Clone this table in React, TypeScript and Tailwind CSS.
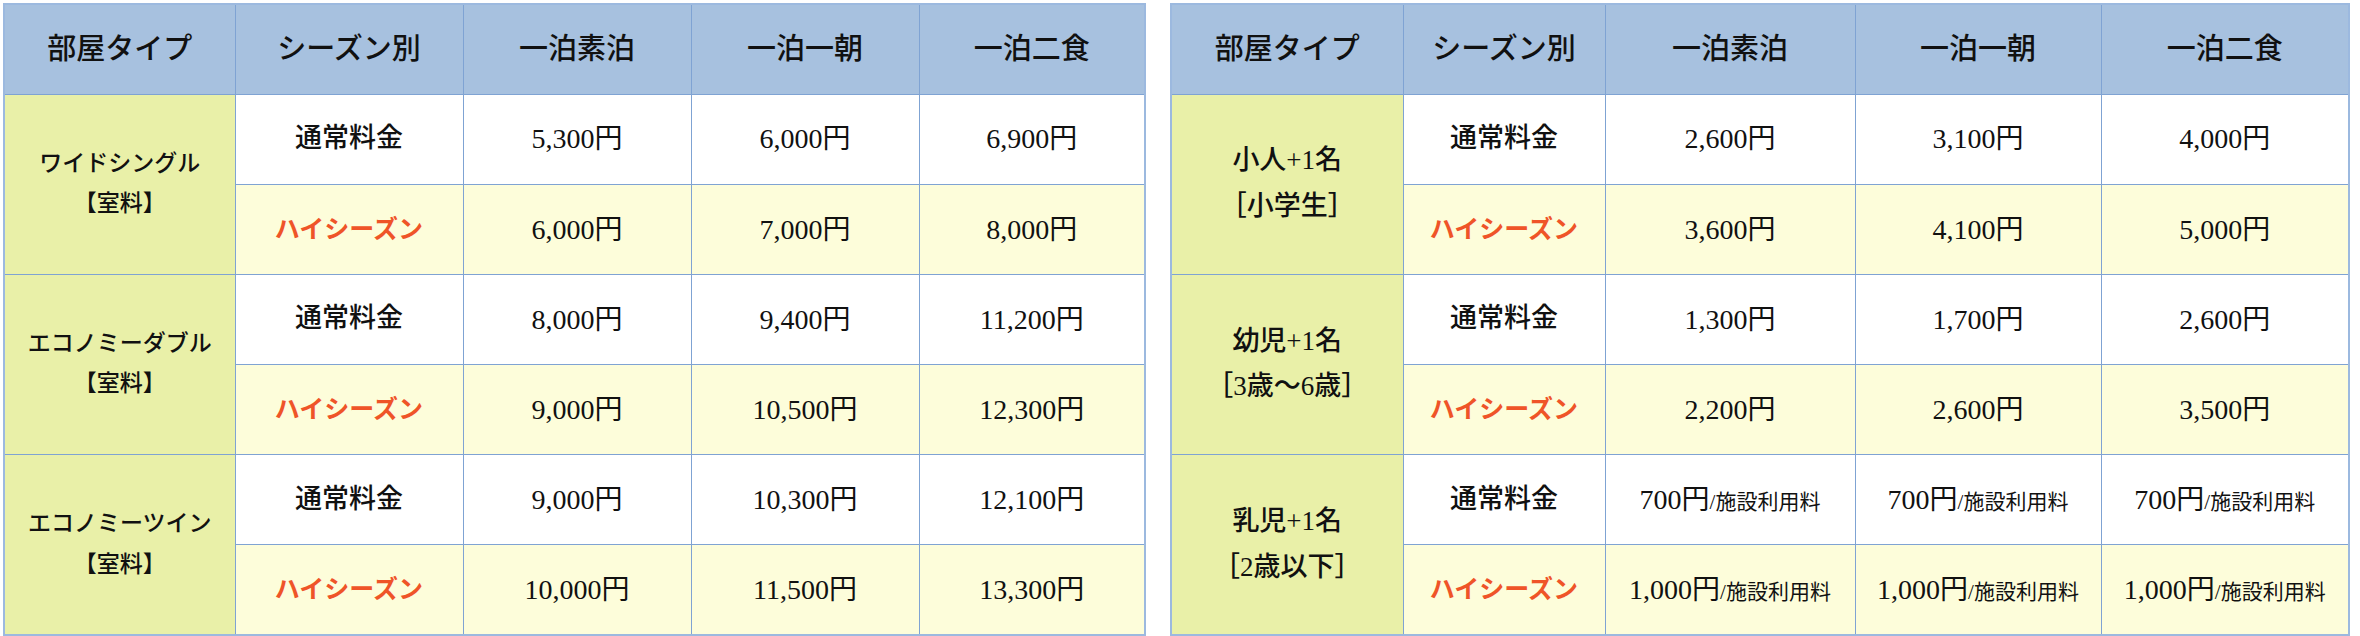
import React from "react";

interface Group {
  name: string;
  note: string;
  normal: string[];
  high: string[];
}

const headers = ["部屋タイプ", "シーズン別", "一泊素泊", "一泊一朝", "一泊二食"];

const rooms: Group[] = [
  {
    name: "ワイドシングル",
    note: "【室料】",
    normal: ["5,300円", "6,000円", "6,900円"],
    high: ["6,000円", "7,000円", "8,000円"],
  },
  {
    name: "エコノミーダブル",
    note: "【室料】",
    normal: ["8,000円", "9,400円", "11,200円"],
    high: ["9,000円", "10,500円", "12,300円"],
  },
  {
    name: "エコノミーツイン",
    note: "【室料】",
    normal: ["9,000円", "10,300円", "12,100円"],
    high: ["10,000円", "11,500円", "13,300円"],
  },
];

const kids: Group[] = [
  {
    name: "小人+1名",
    note: "［小学生］",
    normal: ["2,600円", "3,100円", "4,000円"],
    high: ["3,600円", "4,100円", "5,000円"],
  },
  {
    name: "幼児+1名",
    note: "［3歳～6歳］",
    normal: ["1,300円", "1,700円", "2,600円"],
    high: ["2,200円", "2,600円", "3,500円"],
  },
  {
    name: "乳児+1名",
    note: "［2歳以下］",
    normal: ["700円/施設利用料", "700円/施設利用料", "700円/施設利用料"],
    high: ["1,000円/施設利用料", "1,000円/施設利用料", "1,000円/施設利用料"],
  },
];

const td = "border border-[#7fa3d3] text-center align-middle p-0";

const Price = ({ value }: { value: string }) => {
  const [main, rest] = value.split("/");
  if (!rest) return <>{value}</>;
  return (
    <>
      {main}
      <span className="text-[21px]">/{rest}</span>
    </>
  );
};

const PriceTable = ({
  groups,
  widths,
  nameSize,
}: {
  groups: Group[];
  widths: string[];
  nameSize: string;
}) => (
  <table className="table-fixed border-collapse border-2 border-[#9cb9df]">
    <colgroup>
      {widths.map((w, i) => (
        <col key={i} className={w} />
      ))}
    </colgroup>
    <thead>
      <tr className="h-[90px] bg-[#a7c1df]">
        {headers.map((h) => (
          <th key={h} className={`${td} text-[29px] font-medium text-[#111]`}>
            {h}
          </th>
        ))}
      </tr>
    </thead>
    <tbody>
      {groups.map((g) => (
        <React.Fragment key={g.name}>
          <tr className="h-[90px] bg-white">
            <td rowSpan={2} className={`${td} bg-[#e9f0a8] font-medium ${nameSize}`}>
              <div>{g.name}</div>
              <div className="mt-2">{g.note}</div>
            </td>
            <td className={`${td} text-[27px] font-medium`}>通常料金</td>
            {g.normal.map((p, i) => (
              <td key={i} className={`${td} text-[28px]`}>
                <Price value={p} />
              </td>
            ))}
          </tr>
          <tr className="h-[90px] bg-[#fdfdda]">
            <td className={`${td} text-[25px] font-bold text-[#ef5428]`}>ハイシーズン</td>
            {g.high.map((p, i) => (
              <td key={i} className={`${td} text-[28px]`}>
                <Price value={p} />
              </td>
            ))}
          </tr>
        </React.Fragment>
      ))}
    </tbody>
  </table>
);

export default function App() {
  return (
    <div
      className="flex gap-[24px] pl-[3px] pt-[3px] w-[2360px] h-[636px] bg-white text-[#111] leading-[1.4]"
      style={{ fontFamily: '"Liberation Serif", "Noto Sans CJK JP", serif' }}
    >
      <PriceTable
        groups={rooms}
        widths={["w-[231px]", "w-[228px]", "w-[228px]", "w-[228px]", "w-[226px]"]}
        nameSize="text-[23px]"
      />
      <PriceTable
        groups={kids}
        widths={["w-[232px]", "w-[202px]", "w-[250px]", "w-[246px]", "w-[248px]"]}
        nameSize="text-[27px]"
      />
    </div>
  );
}
